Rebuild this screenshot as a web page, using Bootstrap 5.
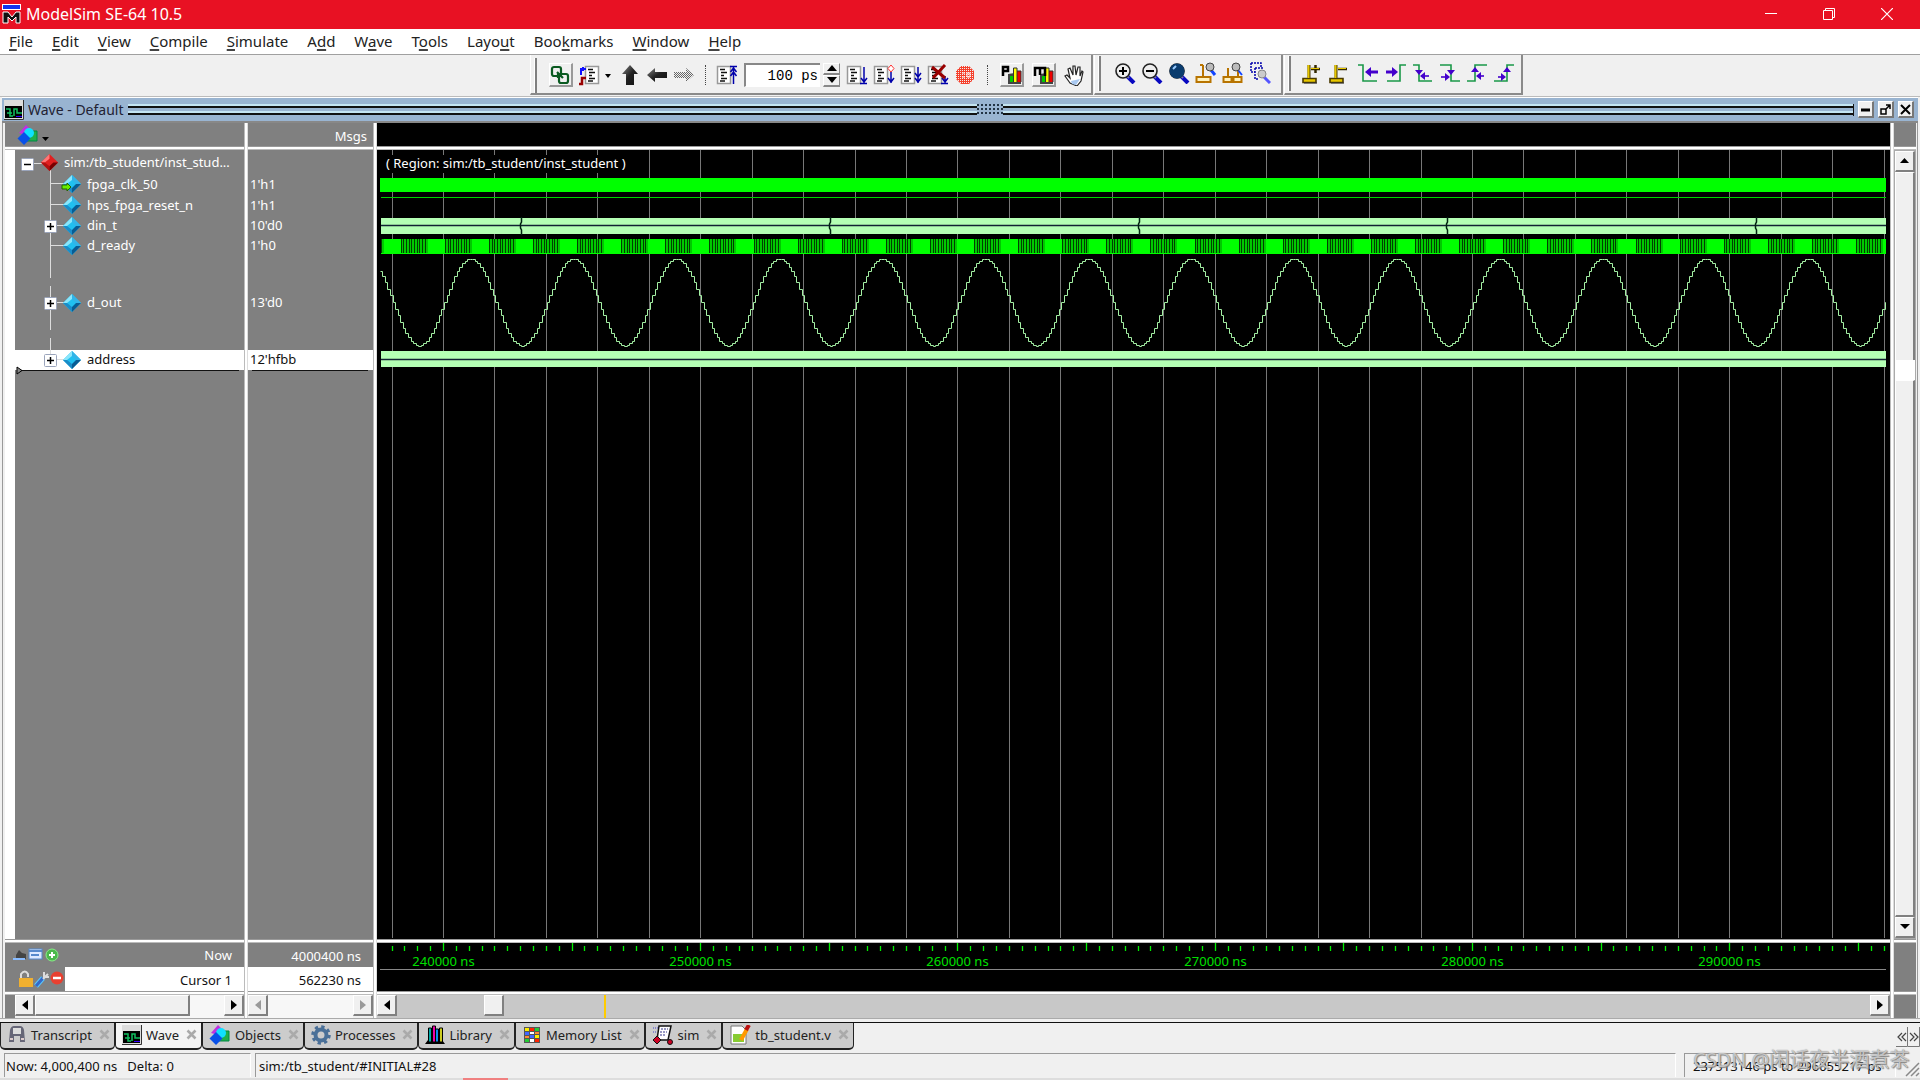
<!DOCTYPE html>
<html lang="en">
<head>
<meta charset="utf-8">
<meta name="viewport" content="width=device-width, initial-scale=1">
<title>ModelSim SE-64 10.5</title>
<link href="https://cdn.jsdelivr.net/npm/bootstrap@5.3.0/dist/css/bootstrap.min.css" rel="stylesheet">
<style>
:root{--face:#f0f0f0;--pane:#808080}
body{font-family:"Noto Sans","Noto Sans CJK SC",sans-serif;font-size:13px;line-height:20px;background:var(--face);color:#111;cursor:default}
button{border:0;padding:0;background:none;font:inherit;color:inherit;display:flex;align-items:center;justify-content:center}
svg{display:block;flex:none}
.titlebar{height:29px;background:#e81123;color:#fff;font-size:16px;padding:0 4px 2px 2px}
.titlebar button{width:58px;height:29px}
.menus{height:26px;background:#fff;border-bottom:1px solid #a0a0a0;padding:0 0 2px 9px;gap:19px;font-size:15px}
.menus a{color:#222;text-decoration:none}
.menus u{text-decoration:underline 2px #444;text-underline-offset:2px;text-decoration-skip-ink:none}
.tools{height:42px;border-bottom:1px solid #bbb}
.tools-empty{width:530px;flex:none}
.tgroup{height:40px;border-right:2px solid #8a8a8a;border-bottom:2px solid #8a8a8a;border-left:1px solid #fff;margin-right:1px;padding-bottom:2px}
.tgroup-run{padding-top:2px;padding-bottom:0}
.grip{width:3px;height:35px;border-right:2px solid #808080;border-left:1px solid #fff;margin:0 10px 0 3px}
.tgroup-cursor .grip{margin-right:6px}
.cell{width:27px;height:26px}
.cell-mid{width:42px}
.cell-big{width:32px}
.cell-up span{width:24px;height:24px;border:1px solid #fff;border-right:2px solid #999;border-bottom:2px solid #999;display:flex;align-items:center;justify-content:center}
.dots{width:16px;height:20px;display:flex;justify-content:center}
.dots-wide{width:18px}
.dots::before{content:"";border-left:1px dotted #444;height:20px}
.steptime{width:76px;height:24px;border:0;border-top:2px solid #888;border-left:2px solid #888;border-bottom:1px solid #fff;background:#fff;font:14px "Liberation Mono",monospace;text-align:right;padding:0 2px;margin-left:4px}
.spins{padding:0 3px}
.spins button{width:17px;height:12px;border:1px solid #fff;border-right-color:#888;border-bottom:2px solid #888}
.paneTitle{height:26px;background:#99b4d1;border-top:1px solid #fff;border-bottom:2px solid #888;padding:0 4px 0 2px;font-size:14px;color:#223;margin:0 2px}
.rails{height:12px;border:solid #111;border-width:0 1px 0 0;background:linear-gradient(#c4e4f2 0 2px,#111 2px 4px,#99b4d1 4px 7px,#c4e4f2 7px 9px,#111 9px 11px,transparent 11px)}
.knurl{width:26px;height:12px;background-color:#99b4d1;background-image:radial-gradient(circle at 1px 1px,#234 1px,transparent 1px);background-size:4px 4px}
.wbtn{width:16px;height:17px;background:var(--face);border:1px solid #fff;border-right:2px solid #777;border-bottom:2px solid #777;margin-left:4px}
.work{border-left:1px solid #999;border-right:1px solid #999;margin:0 2px;padding:0 1px 0 2px}
.colbox{min-height:0;background:#fff}
.c-names{width:239px}.c-vals{width:125px}.c-side{width:22px}
.hd{height:23px;background:var(--pane);color:#fff}
.hd-label{line-height:26px;padding-right:6px}
.gap4{height:4px;flex:none;background:#fff;border-top:1px solid #999;border-bottom:1px solid #bbb}
.ft{height:48px;flex:none}
.sc{height:23px;flex:none;background:var(--face)}
.vsep{width:4px;flex:none;background:#fff;border-left:1px solid #bbb;border-right:1px solid #ddd}
.names,.vals{background:var(--pane);color:#fff;list-style:none;margin:0;padding:0}
.names{border-left:10px solid #fff}
.h24{height:24px}.h21{height:21px}.h20{height:20px}.h94{height:94px}
.names li,.vals li{display:flex;align-items:center;white-space:nowrap}
.names li{position:relative}
.h21,.h20,.h94{padding-bottom:2px}
.vals li{padding-left:2px}
.names svg{margin-right:6px}
.sel{background:#fff;color:#111}
.insline{height:1px;background:#111;margin:0 5px 0 4px}
.wavebox{background:#000;overflow:hidden;min-width:0}
.wavebox svg{width:100%}
.axis text{font:13px "Noto Sans",sans-serif;fill:#00e000}
.sbtn{width:20px;height:21px;background:var(--face);border:1px solid #fff;border-right:2px solid #808080;border-bottom:2px solid #808080;flex:none}
.thumb{height:21px;background:var(--face);border:1px solid #fff;border-right:2px solid #808080;border-bottom:2px solid #808080}
.trough{background:#f7f7f7}
.tabbar{height:31px;border-top:1px solid #111;flex:none;font-size:13px}
.tabbar button{height:27px;background:#ccc;border:1px solid #222;border-top:0;border-bottom-width:2px;border-radius:0 0 5px 5px;padding:0 4px 2px 6px;gap:4px;color:#222}
.tabbar button.on{background:#f4f4f4;border-color:#888 #222 #222}
.tabbar .x{margin-left:3px}
.status{height:27px;flex:none;border-bottom:2px solid #ddd}
.field{height:24px;border-top:1px solid #999;border-left:1px solid #999;border-right:1px solid #fff;padding-left:3px;line-height:24px;white-space:nowrap}
.f1{width:247px;white-space:pre;padding-left:1px}.f3{width:212px;padding-left:8px;position:relative}
.wm{position:absolute;left:8px;top:-6px;font-size:20px;color:rgba(255,255,255,.6);text-shadow:0 0 1px #666,1px 1px 1px #888}
.recmark{position:absolute;left:463px;bottom:0;width:45px;height:2px;background:#f08080}
.fit{min-height:0;min-width:0}
.base-strip{height:4px;border-top:1px solid #aaa;flex:none}
</style>
<script src="https://cdn.jsdelivr.net/npm/bootstrap@5.3.0/dist/js/bootstrap.bundle.min.js"></script>
</head>
<body class="vh-100 d-flex flex-column overflow-hidden m-0">

<svg width="0" height="0" class="position-absolute" aria-hidden="true">
<defs>
<linearGradient id="dk" x1="0" y1="0" x2="1" y2="1"><stop offset="0" stop-color="#888"/><stop offset=".5" stop-color="#222"/><stop offset="1" stop-color="#111"/></linearGradient>
<pattern id="chk" width="2" height="2" patternUnits="userSpaceOnUse"><path fill="#666" d="M0 0h1v1H0zM1 1h1v1H1z"/></pattern>
<pattern id="chr" width="2" height="2" patternUnits="userSpaceOnUse"><path fill="#f5402c" d="M0 0h2v1H0zM0 1h1v1H0z"/></pattern>
<symbol id="page" viewBox="0 0 22 22"><path d="M1.5 2.5h13v17h-13z" fill="#fff" stroke="#999" stroke-width="1.5"/><path d="M4 5.5h5M5 8.5h6M5 11.5h3M5 14.5h6M4 17h5" stroke="#111" stroke-width="1.6"/></symbol>
<symbol id="dia" viewBox="0 0 20 20"><path fill="#20c0f0" d="M10 1l9 9-9 9-9-9z"/><path fill="#8ae6fb" d="M10 1v5l-5 4H1z"/><path fill="#32b4e8" d="M10 1l9 9h-5l-4-4z"/><path fill="#1a8cc8" d="M1 10h4l5 4v5z"/><path fill="#085c94" d="M19 10l-9 9v-5l4-4z"/></symbol>
<symbol id="diar" viewBox="0 0 20 20"><path fill="#e02020" d="M10 1l9 9-9 9-9-9z"/><path fill="#f77" d="M10 1v5l-5 4H1z"/><path fill="#b01010" d="M1 10h4l5 4v5z"/><path fill="#700" d="M19 10l-9 9v-5l4-4z"/></symbol>
<symbol id="box" viewBox="0 0 13 13"><rect x=".5" y=".5" width="12" height="12" rx="1" fill="#fff" stroke="#9aa4bb"/><path d="M3 6.5h7" stroke="#000" stroke-width="1.5"/></symbol>
<symbol id="objs" viewBox="0 0 22 20"><path fill="#20b04a" stroke="#084" d="M10 6h10v10H10z"/><path fill="#c030e0" d="M2 8l7-8 5 5-5 5z"/><circle cx="12" cy="8" r="5" fill="#10e0ff"/><path fill="#0850e8" d="M7 7l6.500 6.500L7 20 .5 13.500z"/></symbol>
<symbol id="wav" viewBox="0 0 20 20"><path fill="#ddd" d="M0 0h20v20H0z"/><path fill="#000" d="M1 6h17v12H1z"/><path fill="none" stroke="#10c060" stroke-width="1.5" d="M2 9h4v7h3M10 16V9h3v4h5M3 13h5"/><path stroke="#30f" d="M12 16.500h6"/><path d="M19.500 0v19.500H0" stroke="#333" fill="none"/></symbol>
<symbol id="mag" viewBox="0 0 22 22"><path d="M13 14l7 7" stroke="#0808c0" stroke-width="4"/><path d="M12 13l3 3" stroke="#77a" stroke-width="2"/><circle cx="9" cy="9" r="7" fill="#eee" stroke="#222" stroke-width="1.6"/></symbol>
<symbol id="base" viewBox="0 0 22 22"><path d="M3 16.500h13v4H3z" fill="#e8c800" stroke="#4a3a00" stroke-width="1.600"/><path d="M9 3v13" stroke="#4a3a00" stroke-width="3"/><path d="M8.500 3v13" stroke="#e8c800" stroke-width="2"/><path d="M17 21H4" stroke="#333"/></symbol>
<symbol id="bars" viewBox="0 0 22 22"><path d="M7 10v10h13V8" fill="#444"/><path fill="#0c0" d="M9 12h3v6H9z"/><path fill="#ff0" d="M12 4h4v14h-4z"/><path fill="#e00" d="M16 7h4v11h-4z"/><path d="M12.500 18V4h3.500v14M16 7h4v11" fill="none" stroke="#333"/></symbol>
<symbol id="x" viewBox="0 0 11 11"><path d="M1.500 1.500l8 8M9.500 1.500l-8 8" stroke="#aaa" stroke-width="2.500"/></symbol>
<symbol id="al" viewBox="0 0 8 10"><path d="M7 0v10L1 5z"/></symbol>
<symbol id="ar" viewBox="0 0 8 10"><path d="M1 0v10l6-5z"/></symbol>
</defs></svg>

<header class="titlebar d-flex align-items-center flex-shrink-0">
  <svg width="20" height="22" viewBox="0 0 20 22"><path fill="#fff" d="M0 1h19v6H0z"/><path fill="#13e" d="M1 2h17v4H1z"/><path d="M1 20V9h5l4 5 4-5h4v11h-4v-6l-4 4-4-4v6z" fill="#111" stroke="#fff"/></svg>
  <span class="ms-1 me-auto">ModelSim SE-64 10.5</span>
  <button aria-label="Minimize"><svg width="12" height="12"><path d="M0 5.500h12" stroke="#fff"/></svg></button>
  <button aria-label="Restore"><svg width="12" height="12" fill="none" stroke="#fff"><path d="M.5 2.500h9v9h-9zM2.500 2.500v-2h9v9h-2"/></svg></button>
  <button aria-label="Close"><svg width="12" height="12"><path d="M0 0l12 12M12 0L0 12" stroke="#fff" stroke-width="1.200"/></svg></button>
</header>

<nav class="menus d-flex align-items-center flex-shrink-0">
  <a href="#"><u>F</u>ile</a><a href="#"><u>E</u>dit</a><a href="#"><u>V</u>iew</a><a href="#"><u>C</u>ompile</a><a href="#"><u>S</u>imulate</a><a href="#">A<u>d</u>d</a><a href="#">W<u>a</u>ve</a><a href="#">T<u>o</u>ols</a><a href="#">Layo<u>u</u>t</a><a href="#">Boo<u>k</u>marks</a><a href="#"><u>W</u>indow</a><a href="#"><u>H</u>elp</a>
</nav>

<div class="tools d-flex flex-shrink-0">
  <div class="tools-empty"></div>
  <div class="tgroup tgroup-run d-flex align-items-center"><span class="grip"></span>
    <button class="cell cell-up" aria-label="Link"><span><svg width="20" height="20" fill="none" stroke="#0a5a20" stroke-width="2.200"><rect x="2" y="2" width="9" height="9" rx="2"/><rect x="9" y="9" width="9" height="9" rx="2"/><path d="M7 7l6 6M8 13v-5"/></svg></span></button>
    <button class="cell cell-mid" aria-label="Find edge"><svg width="32" height="22"><use href="#page" x="5" width="22" height="22"/><path d="M2 11V5h5M4 3v4" stroke="#11f" stroke-width="2" fill="none"/><path d="M0 20h3v-6h4" stroke="#900" stroke-width="2.500" fill="none"/><path d="M26 10h6l-3 4z"/></svg></button>
    <button class="cell" aria-label="Up"><svg width="20" height="22"><path fill="url(#dk)" d="M10 1l8 9h-4v11H6V10H2z"/></svg></button>
    <button class="cell" aria-label="Back"><svg width="22" height="20"><path fill="url(#dk)" d="M1 10l8-7v4h12v6H9v4z"/></svg></button>
    <button class="cell" aria-label="Forward"><svg width="22" height="20"><path fill="url(#chk)" d="M21 10l-8-7v4H1v6h12v4z"/></svg></button>
    <span class="dots"></span>
    <button class="cell" aria-label="Restart"><svg width="22" height="22"><use href="#page" width="22" height="22"/><path d="M14 2.500h7M17.500 20V3M14.500 8l3-4 3 4M14.500 12l3-4 3 4" stroke="#00a" stroke-width="1.500" fill="none"/></svg></button>
    <input class="steptime" aria-label="Run length" value="100 ps">
    <span class="spins d-flex flex-column"><button aria-label="More"><svg width="10" height="7"><path d="M0 6h10L5 0z"/></svg></button><button aria-label="Less"><svg width="10" height="7"><path d="M0 0h10L5 6z"/></svg></button></span>
    <button class="cell" aria-label="Run"><svg width="22" height="22"><use href="#page" width="22" height="22"/><path d="M18 3v16M15 14l3 4 3-4M14 19.500h7" stroke="#00a" stroke-width="1.500" fill="none"/></svg></button>
    <button class="cell" aria-label="Continue"><svg width="22" height="22"><use href="#page" width="22" height="22"/><path d="M18 8v11M15 14l3 4 3-4" stroke="#00a" stroke-width="1.500" fill="none"/><path d="M18 1l3 3.500-3 3.500-3-3.500z" fill="#fff" stroke="#f33"/></svg></button>
    <button class="cell" aria-label="Run all"><svg width="22" height="22"><use href="#page" width="22" height="22"/><path d="M18 3v16M15 9l3 4 3-4M15 14l3 4 3-4" stroke="#00a" stroke-width="1.500" fill="none"/></svg></button>
    <button class="cell" aria-label="Break"><svg width="22" height="22"><use href="#page" width="22" height="22"/><path d="M18 12v7M15 14l3 4 3-4M14 19.500h7" stroke="#00a" stroke-width="1.500" fill="none"/><path d="M5 3l13 11M18 1L6 14" stroke="#900" stroke-width="3"/></svg></button>
    <button class="cell" aria-label="Stop"><svg width="20" height="20"><path fill="url(#chr)" d="M6 1h8l5 5v8l-5 5H6l-5-5V6z"/><path d="M7 8h3M7 12h3M12 8h3v4h-3z" stroke="#fff" fill="none"/></svg></button>
    <span class="dots dots-wide"></span>
    <button class="cell cell-big cell-up" aria-label="Profile"><span><svg width="22" height="22"><use href="#bars" width="22" height="22"/><path d="M2 12V3h5v4H2" fill="none" stroke="#000" stroke-width="2.500"/></svg></span></button>
    <button class="cell cell-big cell-up" aria-label="Memory profile"><span><svg width="22" height="22"><use href="#bars" width="22" height="22"/><path d="M2 12V4h10v8M7 4v7" fill="none" stroke="#000" stroke-width="2.500"/></svg></span></button>
    <button class="cell me-1" aria-label="Hand"><svg width="20" height="22"><path d="M6 19L1 12l2-1 3 3-2-9 2-1 3 7V2h2l1 9 2-8h2v9l2-5 1 1-2 9-4 5z" fill="#fff" stroke="#222" stroke-width="1.200"/><path d="M7 17l9-2-4 6-4-1z" fill="#a8c8f0"/></svg></button>
  </div>
  <div class="tgroup d-flex align-items-center pe-2"><span class="grip"></span>
    <button class="cell" aria-label="Zoom in"><svg width="22" height="22"><use href="#mag" width="22" height="22"/><path d="M5 9h8M9 5v8" stroke="#000" stroke-width="2"/></svg></button>
    <button class="cell" aria-label="Zoom out"><svg width="22" height="22"><use href="#mag" width="22" height="22"/><path d="M5 9h8" stroke="#000" stroke-width="2"/></svg></button>
    <button class="cell" aria-label="Zoom full"><svg width="22" height="22"><use href="#mag" width="22" height="22"/><circle cx="9" cy="9" r="7.500" fill="#0a3c6e"/><path d="M5 7l3-3" stroke="#9cf" stroke-width="2"/></svg></button>
    <button class="cell" aria-label="Zoom on cursor"><svg width="22" height="22"><path d="M1.500 15h14v5h-14zM8 3v12M8 3H5" fill="#fff3c0" stroke="#b87400" stroke-width="2"/><path d="M16 8l4 5" stroke="#14f" stroke-width="3"/><circle cx="15" cy="5" r="4" fill="#bbb" stroke="#444"/></svg></button>
    <button class="cell" aria-label="Zoom between cursors"><svg width="22" height="22"><path d="M1.500 15h8v5h-8zM11.500 15h8v5h-8zM6 6v9M16 9v6" fill="#fff3c0" stroke="#b87400" stroke-width="2"/><path d="M16 8l4 5" stroke="#14f" stroke-width="2"/><circle cx="14" cy="5" r="4" fill="#bbb" stroke="#444"/></svg></button>
    <button class="cell" aria-label="Zoom area"><svg width="22" height="22"><path d="M2 1h10v5M2 1v9h4M6 6h9M6 6v11h4" stroke="#00a" stroke-width="1.500" stroke-dasharray="2 1" fill="none"/><path d="M15 15l6 6" stroke="#55f" stroke-width="3"/><circle cx="13" cy="12" r="4" fill="#ccc" stroke="#888"/></svg></button>
  </div>
  <div class="tgroup tgroup-cursor d-flex align-items-center pe-1"><span class="grip"></span>
    <button class="cell" aria-label="Insert cursor"><svg width="22" height="22"><use href="#base" width="22" height="22"/><path d="M11 7h9M15.500 3v8" stroke="#332800" stroke-width="2.500"/><path d="M11 6.500h8" stroke="#e8c800"/></svg></button>
    <button class="cell me-1" aria-label="Delete cursor"><svg width="22" height="22"><use href="#base" width="22" height="22"/><path d="M11 7h9" stroke="#332800" stroke-width="2.500"/><path d="M11 6.500h8" stroke="#e8c800"/></svg></button>
    <button class="cell" aria-label="Previous transition"><svg width="24" height="22" fill="none" stroke="#1a9848" stroke-width="1.600"><path d="M1 3h5v16h14"/><path d="M12 10h9" stroke="#40c" stroke-width="3"/><path d="M8 10l6-5v10z" fill="#40c" stroke="none"/></svg></button>
    <button class="cell" aria-label="Next transition"><svg width="24" height="22" fill="none" stroke="#1a9848" stroke-width="1.600"><path d="M22 3h-6v16H3"/><path d="M2 10h8" stroke="#40c" stroke-width="3"/><path d="M14 10L8 5v10z" fill="#40c" stroke="none"/></svg></button>
    <button class="cell" aria-label="Previous falling edge"><svg width="22" height="22" fill="none" stroke="#1a9848" stroke-width="1.600"><path d="M1 3h6v16h13"/><path d="M9 14h8" stroke="#40c"/><path d="M8 14l5-4v8zM3 8h8l-4 5z" fill="#40c" stroke="none"/></svg></button>
    <button class="cell" aria-label="Next falling edge"><svg width="22" height="22" fill="none" stroke="#1a9848" stroke-width="1.600"><path d="M1 3h11v16h9"/><path d="M2 15h6" stroke="#40c"/><path d="M11 15l-5-4v8zM8 8h8l-4 5z" fill="#40c" stroke="none"/></svg></button>
    <button class="cell" aria-label="Previous rising edge"><svg width="22" height="22" fill="none" stroke="#1a9848" stroke-width="1.600"><path d="M1 19h8V3h12"/><path d="M11 14h7" stroke="#40c"/><path d="M10 14l5-4v8zM5 10h8L9 5z" fill="#40c" stroke="none"/></svg></button>
    <button class="cell" aria-label="Next rising edge"><svg width="22" height="22" fill="none" stroke="#1a9848" stroke-width="1.600"><path d="M1 19h13V3h7"/><path d="M5 15h5" stroke="#40c"/><path d="M13 15l-5-4v8zM10 10h8l-4-5z" fill="#40c" stroke="none"/></svg></button>
  </div>
</div>

<main class="flex-grow-1 d-flex flex-column fit">
  <div class="paneTitle d-flex align-items-center flex-shrink-0">
    <svg width="20" height="20" class="me-1"><use href="#wav" width="20" height="20"/></svg>
    <span class="me-1">Wave - Default</span>
    <div class="rails flex-grow-1 d-flex justify-content-center"><span class="knurl"></span></div>
    <button class="wbtn" aria-label="Minimize pane"><svg width="11" height="11"><path d="M1 6h9" stroke="#000" stroke-width="3"/></svg></button>
    <button class="wbtn" aria-label="Undock pane"><svg width="11" height="11" fill="none" stroke="#000" stroke-width="1.500"><path d="M1 5h5v5H1zM5 6l5-5M6 1h4v4"/></svg></button>
    <button class="wbtn" aria-label="Close pane"><svg width="11" height="11"><path d="M1 1l9 9M10 1l-9 9" stroke="#000" stroke-width="2"/></svg></button>
  </div>

  <div class="work d-flex flex-grow-1 fit">
    <section class="colbox c-names d-flex flex-column flex-shrink-0">
      <div class="hd d-flex align-items-center ps-2"><button class="ms-1" aria-label="Object filter"><svg width="32" height="20"><use href="#objs" width="22" height="20"/><path d="M25 12h7l-3.500 4z"/></svg></button></div>
      <div class="gap4"></div>
      <ul class="names flex-grow-1" id="names"></ul>
      <div class="gap4"></div>
      <div class="ft d-flex flex-column" style="background:#808080">
        <div class="d-flex align-items-center ps-2 text-white h-50"><svg width="48" height="16" class="me-auto"><path d="M3 12V8l3-5 3 3 4 1v5z" fill="#444"/><path d="M0 12h12" stroke="#8bf" stroke-width="2"/><rect x="16" y="2" width="13" height="10" fill="#dbe8ff" stroke="#58c"/><path d="M16 4h13M18 8h8" stroke="#58c" stroke-width="2"/><circle cx="39" cy="8" r="6" fill="#4cb84c" stroke="#8e8"/><path d="M36 8h6M39 5v6" stroke="#fff" stroke-width="2"/></svg><span class="pe-2 me-1">Now</span></div>
        <div class="d-flex align-items-stretch h-50"><svg width="60" height="22"><path d="M16 11V7q4-5 7 0v3" fill="none" stroke="#ddd" stroke-width="2"/><path d="M14 11h14v9H14z" fill="#f0b030"/><path d="M31 19l7-8" stroke="#58c8ff" stroke-width="5"/><path d="M31 19l7-8" stroke="#3568c8" stroke-width="3"/><path d="M38 12l5-5M39 5v5h5" stroke="#ddd" stroke-width="2" fill="none"/><circle cx="52" cy="11" r="6.500" fill="#e84030"/><path d="M48 11h8" stroke="#fff" stroke-width="2.500"/></svg><span class="bg-white flex-grow-1 text-end pe-2"><span class="me-1 lh-lg">Cursor 1</span></span></div>
      </div>
      <div class="gap4"></div>
      <div class="sc d-flex" style="border-left:10px solid #808080"><button class="sbtn" aria-label="Left"><svg width="8" height="10"><use href="#al"/></svg></button><div class="trough flex-grow-1 d-flex"><div class="thumb" style="width:82%"></div></div><button class="sbtn" aria-label="Right"><svg width="8" height="10"><use href="#ar"/></svg></button></div>
    </section>
    <div class="vsep"></div>
    <section class="colbox c-vals d-flex flex-column flex-shrink-0">
      <div class="hd hd-label text-end">Msgs</div>
      <div class="gap4"></div>
      <ul class="vals flex-grow-1"><li class="h24"></li><li class="h21">1'h1</li><li class="h21">1'h1</li><li class="h20">10'd0</li><li class="h20">1'h0</li><li class="h94">13'd0</li><li class="h20 sel">12'hfbb</li><li class="insline p-0"></li></ul>
      <div class="gap4"></div>
      <div class="ft d-flex flex-column text-end"><div class="h-50 pe-2" style="background:#808080;color:#fff"><span class="me-1 lh-lg">4000400 ns</span></div><div class="h-50 pe-2"><span class="me-1 lh-lg">562230 ns</span></div></div>
      <div class="gap4"></div>
      <div class="sc d-flex"><button class="sbtn" aria-label="Left" disabled><svg width="8" height="10" fill="#999"><use href="#al"/></svg></button><div class="trough flex-grow-1"></div><button class="sbtn" aria-label="Right" disabled><svg width="8" height="10" fill="#999"><use href="#ar"/></svg></button></div>
    </section>
    <div class="vsep"></div>
    <section class="colbox flex-grow-1 d-flex flex-column fit">
      <div class="hd bg-black"></div>
      <div class="gap4"></div>
      <div class="wavebox flex-grow-1"><svg id="wave" height="788"></svg></div>
      <div class="gap4"></div>
      <div class="ft wavebox axis"><svg id="axis" height="48"></svg></div>
      <div class="gap4"></div>
      <div class="sc d-flex" style="background:#c8c8c8"><button class="sbtn" aria-label="Left"><svg width="8" height="10"><use href="#al"/></svg></button><div class="flex-grow-1 d-flex"><div style="width:5.9%"></div><div class="thumb" style="width:20px"></div><div style="width:6.8%"></div><div style="width:2px;background:#fc0"></div></div><button class="sbtn" aria-label="Right"><svg width="8" height="10"><use href="#ar"/></svg></button></div>
    </section>
    <div class="vsep"></div>
    <section class="colbox c-side d-flex flex-column flex-shrink-0">
      <div class="hd"></div>
      <div class="gap4"></div>
      <div class="flex-grow-1 d-flex flex-column" style="background:#f0f0f0;border:1px solid #aaa"><button class="sbtn" aria-label="Up"><svg width="10" height="6"><path d="M0 5h9L4.500 0z"/></svg></button><div class="thumb border-bottom-0" style="height:188px"></div><div class="bg-white" style="height:20px"></div><div class="thumb flex-grow-1"></div><button class="sbtn" aria-label="Down"><svg width="10" height="6"><path d="M0 0h10L5 5z"/></svg></button></div>
      <div class="gap4"></div>
      <div class="ft" style="background:#808080"></div>
      <div class="gap4"></div>
      <div class="sc" style="background:#808080"></div>
    </section>
  </div>
  <div class="base-strip"></div>
</main>

<div class="tabbar d-flex align-items-start">
  <button><svg width="20" height="20"><path d="M2 17l1-12q1-4 4-4h6q3 0 4 4l1 12h-5v-6H7v6z" fill="#667"/><path d="M6 3h8v6H6z" fill="#ddd"/><path d="M3 14h3M14 14h3" stroke="#dcc" stroke-width="2"/></svg><span>Transcript</span><svg class="x" width="11" height="11"><use href="#x"/></svg></button>
  <button class="on"><svg width="20" height="20"><use href="#wav" width="20" height="20"/></svg><span>Wave</span><svg class="x" width="11" height="11"><use href="#x"/></svg></button>
  <button><svg width="22" height="20"><use href="#objs" width="22" height="20"/></svg><span>Objects</span><svg class="x" width="11" height="11"><use href="#x"/></svg></button>
  <button><svg width="20" height="20"><circle cx="10" cy="10" r="8" fill="none" stroke="#4a6f98" stroke-width="3.500" stroke-dasharray="3.200 3.080"/><circle cx="10" cy="10" r="5.500" fill="none" stroke="#4a7098" stroke-width="4"/><circle cx="10" cy="10" r="2" fill="#ccc"/></svg><span>Processes</span><svg class="x" width="11" height="11"><use href="#x"/></svg></button>
  <button><svg width="20" height="20"><path d="M0 19l3-4h14l3 4z"/><path fill="#0aa" stroke="#000" d="M3.500 3h3v14h-3z"/><path fill="#e0a" stroke="#000" d="M7.500 1h3v16h-3z"/><path fill="#0c8cf0" stroke="#000" d="M10.500 4h3v13h-3z"/><path fill="#cc2" stroke="#000" d="M14.500 3h3v14h-3z"/></svg><span>Library</span><svg class="x" width="11" height="11"><use href="#x"/></svg></button>
  <button><svg width="20" height="20"><path fill="#555" d="M2 2h16v16H2z"/><path fill="#fe0" d="M3 3h4v3H3zM13 10h4v3h-4z"/><path fill="#f20" d="M8 3h4v3H8zM13 14h4v3h-4z"/><path fill="#2c3" d="M13 3h4v3h-4zM3 14h4v3H3z"/><path fill="#46f" d="M3 7h4v3H3zM8 10h4v3H8z"/><path fill="#fff" d="M8 7h4v2H8zM8 14h4v3H8z"/><path fill="#f83" d="M13 7h4v2h-4zM3 11h4v2H3z"/></svg><span>Memory List</span><svg class="x" width="11" height="11"><use href="#x"/></svg></button>
  <button><svg width="22" height="20"><path d="M7 1h12l-3 14H5z" fill="#fff" stroke="#111" stroke-width="1.500"/><path d="M9 4h7M8 7h7M8 10h6" stroke="#338" stroke-dasharray="2 1"/><path d="M1 3h5M1 7h4" stroke="#88c" stroke-width="2" stroke-dasharray="1 1"/><path d="M5 11l4 4-4 4-4-4z" fill="#c02" stroke="#111"/><circle cx="18" cy="17" r="2.500" fill="#c02" stroke="#111"/></svg><span>sim</span><svg class="x" width="11" height="11"><use href="#x"/></svg></button>
  <button><svg width="22" height="20"><path d="M2 1h11l4 4v14H2z" fill="#fff" stroke="#777"/><path d="M4 9h11v8H4z" fill="#8c3"/><path d="M12 15l6-11" stroke="#f90" stroke-width="4"/><path d="M17 5l3-5" stroke="#b11" stroke-width="4"/></svg><span>tb_student.v</span><svg class="x" width="11" height="11"><use href="#x"/></svg></button>
  <span class="ms-auto d-flex"><button class="bg-transparent rounded-0 border-0 p-0" aria-label="Scroll tabs left"><svg width="12" height="20"><path d="M6 6l-4 4 4 4M10 6l-4 4 4 4" fill="none" stroke="#444" stroke-width="1.200"/><path d="M11.500 0v19.500H0" stroke="#777" fill="none"/></svg></button><button class="bg-transparent rounded-0 border-0 p-0" aria-label="Scroll tabs right"><svg width="12" height="20"><path d="M2 6l4 4-4 4M6 6l4 4-4 4" fill="none" stroke="#444" stroke-width="1.200"/><path d="M11.500 0v19.500H0" stroke="#777" fill="none"/></svg></button></span>
</div>

<footer class="status d-flex ps-1">
  <div class="field f1">Now: 4,000,400 ns   Delta: 0</div>
  <div class="field flex-grow-1 mx-1">sim:/tb_student/#INITIAL#28</div>
  <div class="field f3 ms-1">237513146 ps to 296055217 ps<span class="wm">CSDN @闲话夜半酒煮茶</span></div>
  <svg width="24" height="24"><path d="M10 23L23 10M15 23l8-8M20 23l3-3" stroke="#888" stroke-width="1.500"/></svg>
</footer>
<div class="recmark"></div>

<script>
// signal tree: [label, row class, row height, kind]
const rows=[["sim:/tb_student/inst_stud...","h24",24,"root"],["fpga_clk_50","h21",21,"clk"],["hps_fpga_reset_n","h21",21,""],["din_t","h20",20,"+"],["d_ready","h20",20,""],["d_out","h94",94,"+"],["address","h20 sel",20,"+"]];
document.getElementById("names").innerHTML=rows.map(([t,c,h,k],i)=>{
  const m=h/2|0,line='stroke="#ddd" fill="none"';
  let s="";
  if(k==="root")s=`<path d="M18 ${m+1}.5h10M35.5 20v4" ${line}/><use href="#box" x="6" y="${m-4}" width="13" height="13"/><use href="#diar" x="25" y="3" width="19" height="19"/>`;
  else{
    const v=h===94?"M35.500 0v23M35.500 31v44M35.500 83v11":i===6?"M35.500 0v10":`M35.500 0v${h}`;
    s=`<path d="${v}M36 ${m}.5h14" ${line}/><use href="#dia" x="47" y="${m-9}" width="20" height="20"/>`;
    if(k==="+")s+=`<use href="#box" x="29" y="${m-5}" width="13" height="13"/><path d="M35.500 ${m-2}v7" stroke="#000" stroke-width="1.500"/>`;
    if(k==="clk")s+=`<path d="M47 12h5v-2l4 4-4 4v-2h-5z" fill="#6e0" stroke="#260"/>`;
  }
  return `<li class="${c}"><svg width="${k==="root"?43:66}" height="${h}" overflow="visible">${s}</svg>${t}</li>`;
}).join("")+'<li class="insline"><svg width="8" height="9" style="margin-left:-3px;overflow:visible"><path d="M1 1v7l5-3.500z" fill="#888" stroke="#000"/></svg></li>';

// waveforms, drawn over the visible time span in ns
const T0=237513,T1=296055,wave=document.getElementById("wave"),axis=document.getElementById("axis");
function draw(){
  const W=wave.clientWidth,k=(W-7)/(T1-T0),X=t=>3+(t-T0)*k,R=W-4;
  let g="",d="",s="",f="";
  for(let t=238000;t<=T1;t+=2000)g+=`M${Math.round(X(t))-.5} 0V788`;
  let o=`<path d="${g}" stroke="#777"/><rect x="6" y="5" width="248" height="18"/><text x="9" y="18" fill="#fff" font-size="13">( Region: sim:/tb_student/inst_student )</text>`;
  o+=`<path d="M3 28H${R}V42H3z" fill="#0f0"/><path d="M4 47.500H${R}" stroke="#00d000"/>`;
  o+=`<path d="M4 68H${R}V84H4zM4 201H${R}V217H4z" fill="#b4ffb4"/><path d="M4 75.500H${R}M4 209.500H${R}" stroke="#123" stroke-width="1.500"/>`;
  for(let t=243000;t<T1;t+=12000){const x=Math.round(X(t))+.5;o+=`<path d="M${x} 67v5l-1 2v4l1 2v5" fill="none" stroke="#021" stroke-width="1.500"/>`}
  o+=`<path d="M4 89H${R}V104H4z" fill="#0f0"/>`;
  for(let t=238319-12000/7;t<T1;t+=12000/7){
    const a=Math.max(4,Math.round(X(t))),b=Math.min(R,Math.round(X(t))+27);
    if(b>a)f+=`M${a} 89H${b}V103H${a}z`;
    for(let i=0;i<10;i++){const x=Math.round(X(t)+i*2.667);if(x>=4&&x<R)s+=`M${x}.5 89v14`}
  }
  o+=`<path d="${f}" fill="#00c800"/><path d="${s}" stroke="#004000"/>`;
  for(let t=T0-13;t<T1;t+=100){const y=Math.round(152+43.5*Math.cos((t-239000)/4000*2*Math.PI))+.5,x=Math.min(R,Math.max(3,Math.round(X(t))+.5));d+=(d?`H${x}V${y}`:`M${x} ${y}`)}
  o+=`<path d="${d}H${R}" fill="none" stroke="#a4f0a4"/>`;
  wave.innerHTML=o;
  let a="",b="",l="";
  for(let t=238000;t<=T1;t+=500){const x=Math.round(X(t))-.5;if(t%5000===0)b+=`M${x} 0v8`;else a+=`M${x} 3v5`;if(t%10000===0)l+=`<text x="${x}" y="23" text-anchor="middle">${t} ns</text>`}
  axis.innerHTML=`<path d="${a}${b}" stroke="#0e0" stroke-width="1.300"/><path d="M3 26.500H${R}" stroke="#888"/>${l}`;
}
draw();addEventListener("resize",draw);
</script>
</body>
</html>
